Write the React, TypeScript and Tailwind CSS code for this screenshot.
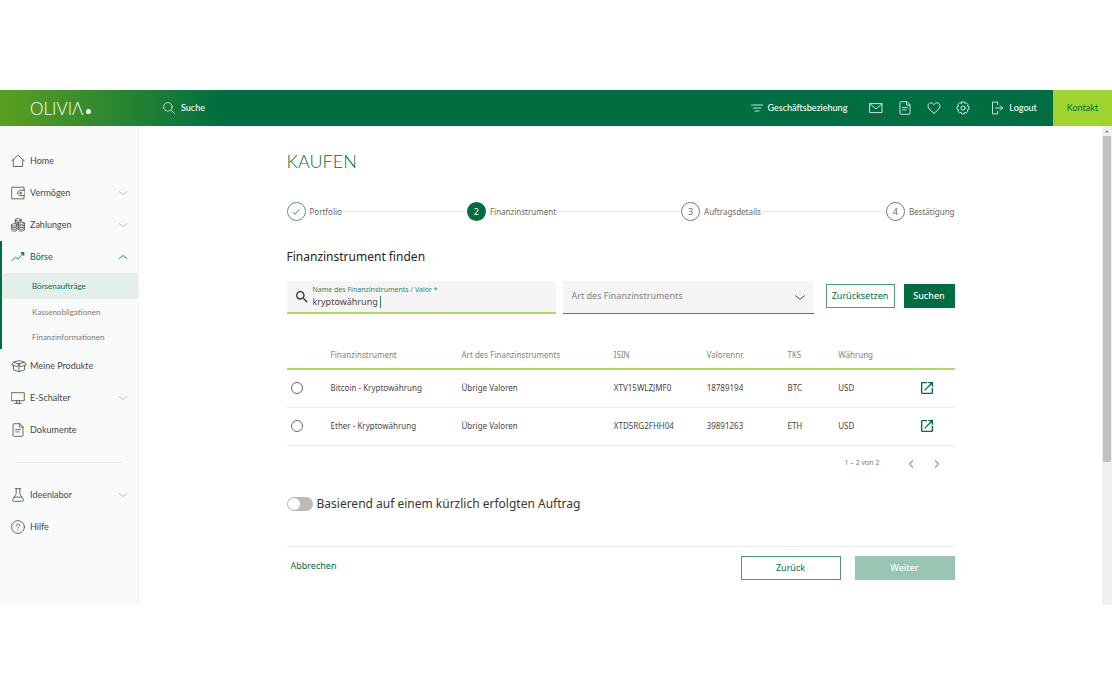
import { useState } from "react";
import type { ReactNode } from "react";

type IconProps = { children: ReactNode; className?: string; viewBox?: string };

function Icon({ children, className = "size-3.5", viewBox = "0 0 14 14" }: IconProps) {
  return (
    <svg
      className={`shrink-0 ${className}`}
      viewBox={viewBox}
      fill="none"
      stroke="currentColor"
      strokeWidth="0.8"
      strokeLinecap="round"
      strokeLinejoin="round"
      aria-hidden="true"
    >
      {children}
    </svg>
  );
}

const HomeIcon = () => (
  <Icon>
    <path d="M.8 6.800 7 1.200l6.200 5.600M2.300 5.600v6.900h9.400V5.600" />
  </Icon>
);
const WalletIcon = () => (
  <Icon>
    <path d="M13 4.300V1.200H.7v11.600H13V9.600M13.600 4.300H9.200C7.700 4.300 6.700 5.500 6.700 7s1 2.600 2.500 2.600h4.400z" />
    <circle cx="9.500" cy="7" r=".8" />
  </Icon>
);
const CoinsIcon = () => (
  <Icon>
    <ellipse cx="7.200" cy="1.900" rx="2.900" ry="1.200" />
    <path d="M4.300 1.900v3.500M10.100 1.900v1.800M4.300 3.600c.5.800 2 1.200 3.200 1M4.900 5.500c.8.500 1.600.6 2.400.5" />
    <ellipse cx="3.300" cy="6.900" rx="2.700" ry="1.200" />
    <path d="M.6 6.900v5c0 1.700 5.400 1.700 5.400 0v-5M.6 8.600c0 1.600 5.400 1.600 5.400 0M.6 10.300c0 1.600 5.400 1.600 5.400 0" />
    <ellipse cx="10.500" cy="5.200" rx="2.900" ry="1.200" />
    <path d="M7.600 5.200v6.700c0 1.700 5.800 1.700 5.800 0V5.200M7.600 6.900c0 1.600 5.800 1.600 5.800 0M7.600 8.600c0 1.600 5.800 1.600 5.800 0M7.600 10.300c0 1.600 5.800 1.600 5.800 0" />
  </Icon>
);
const TrendIcon = () => (
  <Icon>
    <path d="M.8 10.800 4.300 7.300l2.700 1.700 5-5.500" />
    <path d="M10.300 2.600h2.600v2.600z" fill="currentColor" />
  </Icon>
);
const BoxIcon = () => (
  <Icon className="h-3.5 w-4" viewBox="0 0 16 14">
    <path d="M8 4.900 2.600 3.200.6 5.700 6 7.600zM8 4.900l5.400-1.700 2 2.500L10 7.600zM2.600 3.200 8 1.500l5.400 1.700M2.500 6.600v4.200L8 12.700l5.500-1.900V6.600M8 4.900v7.800" />
  </Icon>
);
const MonitorIcon = () => (
  <Icon>
    <path d="M.7 1.700h12.600v8H.7zM5.700 9.700v2.600M8.300 9.700v2.600M3.700 12.400h6.600" />
  </Icon>
);
const DocumentIcon = () => (
  <Icon>
    <path d="M8.600.7H3.200c-.8 0-1.200.4-1.200 1.200v10.200c0 .8.400 1.200 1.200 1.200h7.600c.8 0 1.200-.4 1.200-1.200V4.100zM8.600.7v3.400H12M4.600 6.600h4.800M4.600 8.900h3.600" />
  </Icon>
);
const FlaskIcon = () => (
  <Icon>
    <path d="M4.300.7h5.400M5.200.7v5.100L1.800 11.300c-.6 1.100 0 2 1.100 2h8.200c1.100 0 1.700-.9 1.100-2L8.800 5.800V.7M3.200 9.100h7.600" />
  </Icon>
);
const HelpIcon = () => (
  <Icon>
    <circle cx="7" cy="7" r="6.400" />
    <path d="M5.400 5.500c0-2.200 3.300-2.100 3.300-.1 0 1.300-1.600 1.300-1.600 2.600M7.100 9.900v.2" />
  </Icon>
);
const Chevron = ({ up = false, className = "h-1.5 w-2.5" }: { up?: boolean; className?: string }) => (
  <Icon className={className} viewBox="0 0 10 6">
    <path d={up ? "M1 4.500l4-3L9 4.500" : "M1 1.500l4 3L9 1.500"} />
  </Icon>
);

type NavItem = { label: string; icon: ReactNode; expandable?: boolean };

const mainNav: NavItem[] = [
  { label: "Home", icon: <HomeIcon /> },
  { label: "Vermögen", icon: <WalletIcon />, expandable: true },
  { label: "Zahlungen", icon: <CoinsIcon />, expandable: true },
];
const serviceNav: NavItem[] = [
  { label: "Meine Produkte", icon: <BoxIcon /> },
  { label: "E-Schalter", icon: <MonitorIcon />, expandable: true },
  { label: "Dokumente", icon: <DocumentIcon /> },
];
const extraNav: NavItem[] = [
  { label: "Ideenlabor", icon: <FlaskIcon />, expandable: true },
  { label: "Hilfe", icon: <HelpIcon /> },
];
const stockLinks = ["Börsenaufträge", "Kassenobligationen", "Finanzinformationen"];

function NavRow({ label, icon, expandable }: NavItem) {
  return (
    <a href="#" className="flex h-8 items-center pr-2.5 pl-[11px] text-[#4a463f]">
      <span className="flex w-[19px] shrink-0">{icon}</span>
      <span className="flex-1 whitespace-nowrap">{label}</span>
      {expandable && (
        <span className="text-[#b5b5b0]">
          <Chevron />
        </span>
      )}
    </a>
  );
}

function Sidebar() {
  return (
    <nav className="w-[139px] shrink-0 border-r border-[#f0f2f1] bg-[#f9fbfa] pt-[19px] font-['Lato',sans-serif] text-[9px]">
      {mainNav.map((item) => (
        <NavRow key={item.label} {...item} />
      ))}
      <div className="mb-px border-l-2 border-[#006e40]">
        <a href="#" className="flex h-8 items-center pr-2.5 pl-[9px] text-[#006e40]">
          <span className="flex w-[19px] shrink-0">
            <TrendIcon />
          </span>
          <span className="flex-1">Börse</span>
          <Chevron up />
        </a>
        {stockLinks.map((label, i) => (
          <a
            key={label}
            href="#"
            className={
              i === 0
                ? "flex h-[26px] items-center bg-[#e4efea] pl-[30px] text-[8px] text-[#006e40]"
                : "flex h-[25px] items-center pl-[30px] text-[8px] text-[#7b7872]"
            }
          >
            {label}
          </a>
        ))}
      </div>
      {serviceNav.map((item) => (
        <NavRow key={item.label} {...item} />
      ))}
      <hr className="mx-4 my-4 border-[#e6e9e7]" />
      {extraNav.map((item) => (
        <NavRow key={item.label} {...item} />
      ))}
    </nav>
  );
}

function Header() {
  return (
    <header className="flex h-9 items-center bg-[linear-gradient(90deg,#5aa020_0px,#006e40_222px)] font-['Lato',sans-serif] text-[9px] font-medium text-white">
      <a href="#" aria-label="OLIVIA" className="flex w-[163px] items-center pl-[30px]">
        <span className="text-[17px] leading-none font-light">OLIVIΛ</span>
        <span className="mt-1.5 ml-[3px] size-[5px] rounded-full bg-white" />
      </a>
      <button type="button" className="flex items-center gap-1.5">
        <Icon className="size-3">
          <circle cx="5.700" cy="5.700" r="5" />
          <path d="m9.400 9.400 4 4" />
        </Icon>
        Suche
      </button>
      <div className="ml-auto flex h-full items-center">
        <button type="button" className="mr-[22px] flex items-center gap-[5px]">
          <Icon className="h-2 w-3" viewBox="0 0 12 8">
            <path d="M.5 1h11M2.300 4h7.400M4 7h4" />
          </Icon>
          Geschäftsbeziehung
        </button>
        <div className="mr-[21px] flex items-center gap-[15px]">
          <button type="button" aria-label="Nachrichten" className="flex">
            <Icon>
              <path d="M1 2.600h12v9H1zM1 2.900l6 5 6-5" />
            </Icon>
          </button>
          <button type="button" aria-label="Dokumente" className="flex">
            <DocumentIcon />
          </button>
          <button type="button" aria-label="Favoriten" className="flex">
            <Icon>
              <path d="M7 12.200C4.500 10.300 1 7.800 1 4.800 1 1.600 5.300.8 7 3.700 8.700.8 13 1.600 13 4.800c0 3-3.500 5.500-6 7.400z" />
            </Icon>
          </button>
          <button type="button" aria-label="Einstellungen" className="flex">
            <Icon>
              <circle cx="7" cy="7" r="2.100" />
              <path d="m5.800.9 2.400 0 .5 1.500 1.500-.7 1.800 1.800-.7 1.500 1.700.6v2.600l-1.700.5.7 1.600-1.800 1.700-1.500-.7-.5 1.700H5.800l-.6-1.700-1.500.7-1.800-1.700.8-1.600-1.700-.5V5.600l1.700-.6-.8-1.500 1.800-1.800 1.500.7z" />
            </Icon>
          </button>
        </div>
        <button type="button" className="mr-4 flex items-center gap-1">
          <Icon>
            <path d="M6.700 3.500V1.100H1.500v11.800h5.200v-2.400M4.600 7h6.900M9.200 4.600 11.600 7 9.200 9.400" />
          </Icon>
          Logout
        </button>
        <a href="#" className="flex h-full items-center bg-[#9fd42f] px-3.5 font-normal text-[#006e40]">
          Kontakt
        </a>
      </div>
    </header>
  );
}

const steps = ["Portfolio", "Finanzinstrument", "Auftragsdetails", "Bestätigung"];

function Stepper() {
  return (
    <ol className="flex items-center text-[9px] text-[#6b6660]">
      {steps.map((label, i) => (
        <li key={label} className={i < 3 ? "flex flex-auto items-center" : "flex items-center"}>
          <span
            className={
              i === 0
                ? "flex size-[19px] items-center justify-center rounded-full border border-[#4d9a7a] text-[#006e40]"
                : i === 1
                  ? "flex size-[19px] items-center justify-center rounded-full bg-[#006e40] text-white"
                  : "flex size-[19px] items-center justify-center rounded-full border border-[#7b7872]"
            }
          >
            {i === 0 ? (
              <Icon className="size-2" viewBox="0 0 8 8">
                <path d="m1 4.300 2 2L7 2" />
              </Icon>
            ) : (
              i + 1
            )}
          </span>
          <span className="ml-1 text-[8px]">{label}</span>
          {i < 3 && <span className="h-px flex-1 bg-[#ececec]" />}
        </li>
      ))}
    </ol>
  );
}

const instruments = [
  { name: "Bitcoin - Kryptowährung", isin: "XTV15WLZJMF0", valor: "18789194", tks: "BTC" },
  { name: "Ether - Kryptowährung", isin: "XTD5RG2FHH04", valor: "39891263", tks: "ETH" },
];

function InstrumentTable() {
  return (
    <table className="mt-[27px] w-full table-fixed text-left text-[8px] text-[#4a463f]">
      <colgroup>
        <col className="w-[6.6%]" />
        <col className="w-[19.6%]" />
        <col className="w-[22.8%]" />
        <col className="w-[13.9%]" />
        <col className="w-[12.1%]" />
        <col className="w-[7.6%]" />
        <col className="w-[12.2%]" />
        <col />
      </colgroup>
      <thead>
        <tr className="h-7 border-b-2 border-[#b0da5c] text-[#85827c]">
          <td />
          <th className="font-normal">Finanzinstrument</th>
          <th className="font-normal">Art des Finanzinstruments</th>
          <th className="font-normal">ISIN</th>
          <th className="font-normal">Valorennr.</th>
          <th className="font-normal">TKS</th>
          <th className="font-normal">Währung</th>
          <td />
        </tr>
      </thead>
      <tbody>
        {instruments.map((row) => (
          <tr key={row.isin} className="h-[38px] border-b border-[#ececec]">
            <td className="pl-1">
              <input
                type="radio"
                name="instrument"
                aria-label={row.name}
                className="block size-3 appearance-none rounded-full border border-[#6b6660] checked:border-4 checked:border-[#006e40]"
              />
            </td>
            <td>{row.name}</td>
            <td>Übrige Valoren</td>
            <td>{row.isin}</td>
            <td>{row.valor}</td>
            <td>{row.tks}</td>
            <td>USD</td>
            <td>
              <a href="#" aria-label={`${row.name} öffnen`} className="-ml-px flex text-[#006e40]">
                <svg className="size-4" viewBox="0 0 24 24" fill="currentColor" aria-hidden="true">
                  <path d="M19 19H5V5h7V3H5a2 2 0 0 0-2 2v14a2 2 0 0 0 2 2h14c1.100 0 2-.9 2-2v-7h-2v7zM14 3v2h3.590l-9.830 9.830 1.410 1.410L19 6.410V10h2V3h-7z" />
                </svg>
              </a>
            </td>
          </tr>
        ))}
      </tbody>
    </table>
  );
}

function SearchForm() {
  const [query, setQuery] = useState("kryptowährung");
  return (
    <form className="mt-[15px] flex items-start" onSubmit={(e) => e.preventDefault()}>
      <div className="relative flex h-[33px] flex-[269] items-center border-b-2 border-[#b0da5c] bg-[#f5f5f5]">
        <svg className="ml-[7px] size-4 shrink-0 text-[#3a362f]" viewBox="0 0 24 24" fill="currentColor" aria-hidden="true">
          <path d="M15.500 14h-.79l-.28-.27A6.470 6.470 0 0 0 16 9.500 6.500 6.500 0 1 0 9.500 16c1.610 0 3.090-.59 4.230-1.570l.27.28v.79l5 4.990L20.490 19l-4.990-5zm-6 0C7.010 14 5 11.990 5 9.500S7.010 5 9.500 5 14 7.010 14 9.500 11.990 14 9.500 14z" />
        </svg>
        <div className="ml-[3px] flex min-w-0 flex-1 flex-col">
          <label htmlFor="instrument-name" className="text-[7px] leading-[10px] text-[#2f8862]">
            Name des Finanzinstruments / Valor *
          </label>
          <input
            id="instrument-name"
            value={query}
            onChange={(e) => setQuery(e.target.value)}
            className="w-full bg-transparent text-[9px] leading-[14px] text-[#4a463f] outline-none"
          />
        </div>
        <span className="absolute bottom-1 left-[93px] h-3 w-px bg-[#2f8862]" />
      </div>
      <div className="relative ml-[7px] h-[33px] flex-[251]">
        <select
          aria-label="Art des Finanzinstruments"
          className="h-full w-full appearance-none rounded-none border-b border-[#6b6f5f] bg-[#f5f5f5] px-[9px] pb-0.5 text-[9px] text-[#85827c] outline-none"
        >
          <option>Art des Finanzinstruments</option>
        </select>
        <span className="pointer-events-none absolute inset-y-0 right-2 flex items-center text-[#4a463f]">
          <Chevron className="h-[7px] w-3" />
        </span>
      </div>
      <button type="reset" className="mt-[3px] ml-3 h-6 w-[69px] border border-[#4d9a7a] bg-white text-[9px] text-[#006e40]">
        Zurücksetzen
      </button>
      <button type="submit" className="mt-[3px] ml-[9px] h-6 w-[51px] bg-[#006e40] text-[9px] font-medium text-white">
        Suchen
      </button>
    </form>
  );
}

function Pager() {
  return (
    <div className="flex h-9 items-center justify-end pr-3 text-[7px] text-[#7b7872]">
      <span>1 – 2 von 2</span>
      <button type="button" aria-label="Vorherige Seite" className="ml-[25px] flex text-[#9a9893]">
        <Icon className="h-2 w-3" viewBox="0 0 12 8">
          <path d="M7.500 1l-3 3 3 3" strokeWidth="1.200" />
        </Icon>
      </button>
      <button type="button" aria-label="Nächste Seite" className="ml-3.5 flex text-[#9a9893]">
        <Icon className="h-2 w-3" viewBox="0 0 12 8">
          <path d="M4.500 1l3 3-3 3" strokeWidth="1.200" />
        </Icon>
      </button>
    </div>
  );
}

function Scrollbar() {
  return (
    <div className="flex w-2.5 shrink-0 flex-col items-center bg-[#f0f0f0]" aria-hidden="true">
      <svg className="h-2.5 w-2.5" viewBox="0 0 10 10" fill="#8a8a8a">
        <path d="M3 6.500h4L5 4z" />
      </svg>
      <div className="h-[68%] w-2 bg-[#c1c1c1]" />
    </div>
  );
}

export default function App() {
  return (
    <div className="min-h-screen bg-white py-[90px] font-['Noto_Sans',sans-serif]">
      <Header />
      <div className="flex min-h-[479px]">
        <Sidebar />
        <main className="min-w-0 flex-1 px-6 pt-5">
          <div className="mx-auto max-w-[668px]">
            <h1 className="font-['Lato',sans-serif] text-[18px] leading-[30px] font-light text-[#006e40]">KAUFEN</h1>
            <div className="mt-[26px]">
              <Stepper />
            </div>
            <h2 className="mt-[27px] text-[12px] leading-[18px] text-[#26231f]">Finanzinstrument finden</h2>
            <SearchForm />
            <InstrumentTable />
            <Pager />
            <label className="mt-3.5 flex h-4 items-center gap-1 text-[12px] text-[#3a362f]">
              <input type="checkbox" role="switch" className="peer sr-only" />
              <span className="flex h-3.5 w-[26px] items-center rounded-full bg-[#bfbab7] px-px peer-checked:justify-end peer-checked:bg-[#006e40]">
                <span className="size-3 rounded-full bg-white" />
              </span>
              Basierend auf einem kürzlich erfolgten Auftrag
            </label>
            <div className="mt-[34px] flex items-start border-t border-[#ececec] pt-[9px] text-[9px]">
              <button type="button" className="ml-1 h-5 text-[#006e40]">
                Abbrechen
              </button>
              <button type="button" className="ml-auto h-6 w-[100px] border border-[#4d9a7a] bg-white text-[#006e40]">
                Zurück
              </button>
              <button type="button" className="ml-3.5 h-6 w-[100px] bg-[#9bc5b3] font-medium text-white">
                Weiter
              </button>
            </div>
          </div>
        </main>
        <Scrollbar />
      </div>
    </div>
  );
}
